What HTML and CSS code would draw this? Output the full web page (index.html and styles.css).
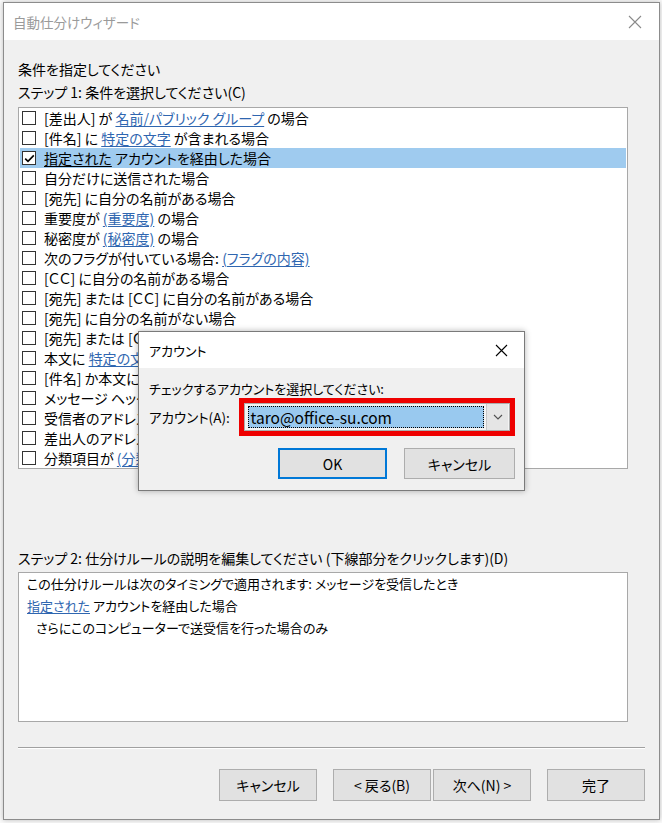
FILE: index.html
```html
<!DOCTYPE html>
<html lang="ja">
<head>
<meta charset="utf-8">
<title>自動仕分けウィザード</title>
<link rel="stylesheet" href="styles.css">
</head>
<body>
<div class="desk">
  <div class="win main">
    <div class="titlebar">
      <span class="title">自動仕分けウィザード</span>
      <svg class="close" width="14" height="14" viewBox="0 0 14 14"><path d="M1 1L13 13M13 1L1 13" stroke="#8a8a8a" stroke-width="1.1" fill="none"/></svg>
    </div>
    <div class="body">
      <div class="label first">条件を指定してください</div>
      <div class="label">ステップ 1: 条件を選択してください(C)</div>
      <div class="list">
        <div class="row"><span class="cb"></span><span class="txt">[差出人] が <span class="lnk">名前/パブリック グループ</span> の場合</span></div>
        <div class="row"><span class="cb"></span><span class="txt">[件名] に <span class="lnk">特定の文字</span> が含まれる場合</span></div>
        <div class="row sel"><span class="cb"><svg width="13" height="13" viewBox="0 0 13 13"><path d="M2.2 6.6L5 9.4L10.8 3.4" stroke="#000" stroke-width="1.6" fill="none"/></svg></span><span class="txt"><span class="lnk dark">指定された</span> アカウントを経由した場合</span></div>
        <div class="row"><span class="cb"></span><span class="txt">自分だけに送信された場合</span></div>
        <div class="row"><span class="cb"></span><span class="txt">[宛先] に自分の名前がある場合</span></div>
        <div class="row"><span class="cb"></span><span class="txt">重要度が <span class="lnk">(重要度)</span> の場合</span></div>
        <div class="row"><span class="cb"></span><span class="txt">秘密度が <span class="lnk">(秘密度)</span> の場合</span></div>
        <div class="row"><span class="cb"></span><span class="txt">次のフラグが付いている場合: <span class="lnk">(フラグの内容)</span></span></div>
        <div class="row"><span class="cb"></span><span class="txt">[ＣＣ] に自分の名前がある場合</span></div>
        <div class="row"><span class="cb"></span><span class="txt">[宛先] または [ＣＣ] に自分の名前がある場合</span></div>
        <div class="row"><span class="cb"></span><span class="txt">[宛先] に自分の名前がない場合</span></div>
        <div class="row"><span class="cb"></span><span class="txt">[宛先] または [ＣＣ] に自分の名前がない場合</span></div>
        <div class="row"><span class="cb"></span><span class="txt">本文に <span class="lnk">特定の文字</span> が含まれる場合</span></div>
        <div class="row"><span class="cb"></span><span class="txt">[件名] か本文に <span class="lnk">特定の文字</span> が含まれる場合</span></div>
        <div class="row"><span class="cb"></span><span class="txt">メッセージ ヘッダーに <span class="lnk">特定の文字</span> が含まれる場合</span></div>
        <div class="row"><span class="cb"></span><span class="txt">受信者のアドレスに <span class="lnk">特定の文字</span> が含まれる場合</span></div>
        <div class="row"><span class="cb"></span><span class="txt">差出人のアドレスに <span class="lnk">特定の文字</span> が含まれる場合</span></div>
        <div class="row"><span class="cb"></span><span class="txt">分類項目が <span class="lnk">(分類項目)</span> の場合</span></div>
      </div>
      <div class="label step2">ステップ 2: 仕分けルールの説明を編集してください (下線部分をクリックします)(D)</div>
      <div class="desc">
        <div class="dline">この仕分けルールは次のタイミングで適用されます: メッセージを受信したとき</div>
        <div class="dline"><span class="lnk">指定された</span> アカウントを経由した場合</div>
        <div class="dline indent">さらにこのコンピューターで送受信を行った場合のみ</div>
      </div>
      <div class="sep"></div>
      <div class="buttons">
        <button class="btn">キャンセル</button>
        <button class="btn gap-l">&lt; 戻る(B)</button>
        <button class="btn gap-s">次へ(N) &gt;</button>
        <button class="btn gap-l">完了</button>
      </div>
    </div>
  </div>

  <div class="win modal">
    <div class="mtitlebar">
      <span class="mtitle">アカウント</span>
      <svg class="mclose" width="13" height="13" viewBox="0 0 13 13"><path d="M1 1L12 12M12 1L1 12" stroke="#000" stroke-width="1.1" fill="none"/></svg>
    </div>
    <div class="mbody">
      <div class="mlabel">チェックするアカウントを選択してください:</div>
      <div class="mrow">
        <span class="acct">アカウント(A):</span>
        <div class="redbox">
          <div class="combo">
            <div class="combosel">taro@office-su.com</div>
            <div class="dropbtn"><svg width="10" height="6" viewBox="0 0 10 6"><path d="M1 1L5 5L9 1" stroke="#505050" stroke-width="1.1" fill="none"/></svg></div>
          </div>
        </div>
      </div>
      <div class="mbuttons">
        <button class="btn ok">OK</button>
        <button class="btn mcancel">キャンセル</button>
      </div>
    </div>
  </div>
</div>
</body>
</html>
```
FILE: styles.css
```css
html, body {
  margin: 0;
  padding: 0;
  background: #ffffff;
}
body {
  font-family: "Noto Sans CJK JP", "Noto Sans", sans-serif;
  font-feature-settings: "palt";
  color: #000;
  width: 662px;
  height: 823px;
  overflow: hidden;
}
.desk {
  position: relative;
  padding: 2px 2px 0 3px;
  background: #fafafa;
  height: 823px;
  box-sizing: border-box;
}
.win {
  box-sizing: border-box;
  border: 1px solid #8c8c8c;
  background: #f0f0f0;
}
.main {
  width: 657px;
  height: 818px;
  box-shadow: 0 0 5px rgba(0,0,0,0.25);
}
.titlebar {
  height: 37px;
  background: #fff;
  display: flex;
  align-items: center;
  justify-content: space-between;
  padding: 0 17px 0 9px;
}
.title {
  font-size: 13.5px;
  color: #9a9a9a;
}
.close { display: block; }
.body {
  padding: 18px 14px 0 14px;
}
.label {
  font-size: 14px;
  line-height: 23px;
  height: 23px;
  white-space: nowrap;
}
.list {
  margin-top: 3px;
  width: 610px;
  height: 362px;
  box-sizing: border-box;
  border: 1px solid #a8a8a8;
  background: #fff;
  padding: 0 1px;
}
.row {
  height: 20px;
  display: flex;
  align-items: center;
  padding-left: 2px;
  font-size: 14px;
  white-space: nowrap;
}
.row.sel { background: #9fcbef; }
.cb {
  width: 14px;
  height: 14px;
  box-sizing: border-box;
  border: 1px solid #333;
  background: #fff;
  margin-right: 8px;
  flex: none;
  position: relative;
}
.cb svg { position: absolute; left: -0.5px; top: -0.5px; }
.lnk {
  color: #2f66b0;
  text-decoration: underline;
  text-underline-offset: 2px;
}
.lnk.dark { color: #000; }
.step2 { margin-top: 78px; }
.desc {
  margin-top: 2px;
  width: 610px;
  height: 150px;
  box-sizing: border-box;
  border: 1px solid #a8a8a8;
  background: #fff;
  padding: 0 8px;
}
.dline {
  font-size: 13px;
  line-height: 22px;
  height: 22px;
  white-space: nowrap;
}
.indent { padding-left: 9px; }
.sep {
  margin-top: 25px;
  width: 627px;
  border-top: 1px solid #a0a0a0;
  border-bottom: 1px solid #fff;
}
.buttons {
  margin-top: 20px;
  width: 627px;
  display: flex;
  justify-content: flex-end;
}
.btn {
  font-family: "Noto Sans CJK JP", "Noto Sans", sans-serif;
  font-feature-settings: "palt";
  font-size: 14px;
  color: #000;
  background: #e1e1e1;
  border: 1px solid #adadad;
  width: 98px;
  height: 32px;
  padding: 0;
  margin: 0;
}
.gap-l { margin-left: 16px; }
.gap-s { margin-left: 2px; }

.modal {
  position: absolute;
  left: 138px;
  top: 331px;
  width: 387px;
  height: 160px;
  border-color: #7a7a7a;
  box-shadow: 0 0 6px rgba(0,0,0,0.3);
}
.mtitlebar {
  height: 36px;
  background: #fff;
  display: flex;
  align-items: center;
  justify-content: space-between;
  padding: 0 16px 0 10px;
}
.mtitle { font-size: 13px; }
.mclose { display: block; }
.mbody { padding: 11px 9px 0 10px; }
.mlabel {
  font-size: 13px;
  line-height: 20px;
  height: 20px;
  white-space: nowrap;
}
.mrow {
  display: flex;
  align-items: center;
  margin-top: -1px;
}
.acct {
  width: 92px;
  font-size: 13.5px;
  white-space: nowrap;
}
.redbox {
  border: 5px solid #ee0000;
  width: 280px;
  height: 38px;
  box-sizing: border-box;
}
.combo {
  height: 28px;
  box-sizing: border-box;
  border: 1px solid #adadad;
  background: #f4f4f4;
  display: flex;
  padding: 2px 1px 2px 3px;
  gap: 2px;
}
.combosel {
  flex: 1;
  background: #99c9ef;
  border: 1px dotted #000;
  font-size: 15.5px;
  line-height: 20px;
  padding-left: 1px;
  white-space: nowrap;
}
.dropbtn {
  width: 22px;
  margin: -2px 0;
  box-sizing: border-box;
  border-left: 1px solid #c8c8c8;
  background: #e5e5e5;
  display: flex;
  align-items: center;
  justify-content: center;
}
.mbuttons {
  margin-top: 12px;
  display: flex;
  justify-content: flex-end;
  gap: 17px;
}
.ok {
  width: 109px;
  height: 31px;
  border: 2px solid #0078d7;
}
.mcancel {
  width: 111px;
  height: 31px;
}
```
